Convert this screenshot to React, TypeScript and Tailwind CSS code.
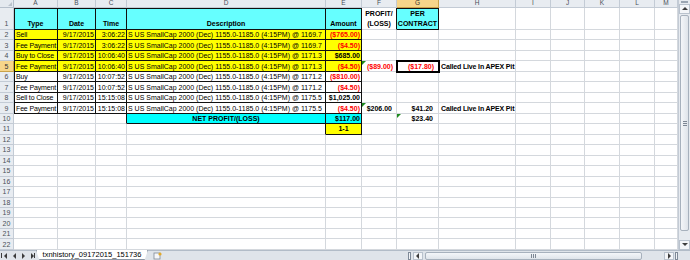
import type { ReactNode } from "react";

const COLS = ["A", "B", "C", "D", "E", "F", "G", "H", "I", "J", "K", "L", "M"];

const txns = [
  { type: "Sell", time: "3:06:22", px: "1169.7", amt: "($765.00)", neg: true },
  { type: "Fee Payment", time: "3:06:22", px: "1169.7", amt: "($4.50)", neg: true },
  { type: "Buy to Close", time: "10:06:40", px: "1171.3", amt: "$685.00", neg: false },
  { type: "Fee Payment", time: "10:06:40", px: "1171.3", amt: "($4.50)", neg: true },
  { type: "Buy", time: "10:07:52", px: "1171.2", amt: "($810.00)", neg: true },
  { type: "Fee Payment", time: "10:07:52", px: "1171.2", amt: "($4.50)", neg: true },
  { type: "Sell to Close", time: "15:15:08", px: "1175.5", amt: "$1,025.00", neg: false },
  { type: "Fee Payment", time: "15:15:08", px: "1175.5", amt: "($4.50)", neg: true },
];

const GRID = "border-r border-b border-[#d4d8dd]";
const BOX = "border-r border-b border-[#111]";

const Tri = () => (
  <span className="absolute left-0 top-0 h-0 w-0 border-t-[4px] border-r-[4px] border-t-[#1e8a1e] border-r-transparent" />
);

type C = { content?: ReactNode; cls: string };

function buildCell(r: number, c: number): C {
  const col = COLS[c];
  // header row 1
  if (r === 1) {
    if (c <= 4) {
      const labels = ["Type", "Date", "Time", "Description", "Amount"];
      return {
        content: labels[c],
        cls: `${BOX} bg-[#66ffff] font-bold justify-center items-end pb-[1px] ${c === 0 ? "shadow-[inset_1px_1px_0_#111]" : "shadow-[inset_0_1px_0_#111]"}`,
      };
    }
    if (col === "F")
      return {
        content: (
          <span className="text-center leading-[10px]">
            PROFIT/
            <br />
            (LOSS)
          </span>
        ),
        cls: "border-r border-b border-r-[#111] border-b-[#d4d8dd] font-bold justify-center items-center",
      };
    if (col === "G")
      return {
        content: (
          <span className="text-center leading-[10px]">
            PER
            <br />
            CONTRACT
          </span>
        ),
        cls: `${BOX} bg-[#66ffff] font-bold justify-center items-center shadow-[inset_0_1px_0_#111]`,
      };
    return { cls: GRID };
  }
  if (r >= 2 && r <= 9) {
    const t = txns[r - 2];
    const fill = r <= 5 ? "bg-[#ffff00]" : "bg-white";
    if (c <= 4) {
      const base = `${BOX} ${fill}`;
      if (c === 0)
        return {
          content: t.type,
          cls: `${base} justify-start pl-[2px] tracking-[-0.15px] overflow-hidden shadow-[inset_1px_0_0_#111]`,
        };
      if (c === 1) return { content: "9/17/2015", cls: `${base} justify-end pr-[1px]` };
      if (c === 2) return { content: t.time, cls: `${base} justify-end pr-[1px]` };
      if (c === 3)
        return {
          content: `S US SmallCap 2000 (Dec) 1155.0-1185.0 (4:15PM) @ ${t.px}`,
          cls: `${base} justify-start pl-[1px] overflow-hidden`,
        };
      return {
        content: t.amt,
        cls: `${base} justify-end pr-[1px] font-bold ${t.neg ? "text-[#ff0000]" : "text-black"}`,
      };
    }
    if (r === 5) {
      if (col === "F")
        return { content: <><Tri />($89.00)</>, cls: `${GRID} relative justify-end pr-[3px] font-bold text-[#ff0000]` };
      if (col === "G")
        return {
          content: "($17.80)",
          cls: `${GRID} relative z-10 justify-end pr-[4px] font-bold text-[#ff0000] outline-2 outline-black -outline-offset-1 bg-white`,
        };
      if (col === "H") return { content: "Called Live In APEX Pit", cls: `${GRID} justify-start pl-[2px] font-bold tracking-[-0.15px]` };
    }
    if (r === 9) {
      if (col === "F") return { content: <><Tri />$206.00</>, cls: `${GRID} relative justify-end pr-[4px] font-bold` };
      if (col === "G") return { content: "$41.20", cls: `${GRID} justify-end pr-[5px] font-bold` };
      if (col === "H") return { content: "Called Live In APEX Pit", cls: `${GRID} justify-start pl-[2px] font-bold tracking-[-0.15px]` };
    }
    return { cls: GRID };
  }
  if (r === 10) {
    if (col === "C") return { cls: "border-r border-b border-r-[#111] border-b-[#d4d8dd]" };
    if (col === "D") return { content: "NET PROFIT/(LOSS)", cls: `${BOX} bg-[#00ffff] justify-center font-bold` };
    if (col === "E") return { content: "$117.00", cls: `${BOX} bg-[#00ffff] justify-end pr-[1px] font-bold` };
    if (col === "G") return { content: <><Tri />$23.40</>, cls: `${GRID} relative justify-end pr-[5px] font-bold` };
    return { cls: GRID };
  }
  if (r === 11) {
    if (col === "D") return { cls: "border-r border-b border-r-[#111] border-b-[#d4d8dd]" };
    if (col === "E") return { content: "1-1", cls: `${BOX} bg-[#ffff00] justify-center font-bold` };
  }
  return { cls: GRID };
}

const Arrow = ({ dir }: { dir: "up" | "down" | "left" | "right" }) => {
  const pts = {
    up: "1,5 4,2 7,5",
    down: "1,2 4,5 7,2",
    left: "5,1 2,4 5,7",
    right: "3,1 6,4 3,7",
  }[dir];
  return (
    <svg width="8" height="8" viewBox="0 0 8 8">
      <polygon points={pts} fill="#3c3c3c" />
    </svg>
  );
};

export default function App() {
  const rows = Array.from({ length: 22 }, (_, i) => i + 1);
  return (
    <div className="flex h-[260px] w-[690px] flex-col overflow-hidden bg-white font-['Liberation_Sans',Arial,sans-serif] text-[7px] text-black">
      <div className="flex h-[250px]">
        <div className="grid h-[250px] grid-cols-[14px_44px_38px_31px_199px_36px_35px_42px_77px_35px_34px_35px_35px_23px] grid-rows-[8px_22px_repeat(21,10.476px)]">
          <div className="relative border-r border-b border-[#b5bfcb] bg-[#e4e9ef]">
            <span className="absolute right-[1px] bottom-[1px] h-0 w-0 border-b-[4px] border-l-[4px] border-b-[#b9c1cb] border-l-transparent" />
          </div>
          {COLS.map((c) => (
            <div
              key={c}
              className={`flex items-center justify-center border-r border-b text-[6.5px] leading-none ${
                c === "G"
                  ? "border-[#c9a24a] bg-[#f7d58a] text-[#333]"
                  : "border-[#c3cbd5] bg-[#e8ecf1] text-[#4a4f57]"
              }`}
            >
              {c}
            </div>
          ))}
          {rows.map((r) => (
            <div key={r} className="contents">
              <div
                className={`flex justify-center border-r border-b text-[7px] leading-none ${
                  r === 5
                    ? "border-[#c9a24a] bg-[#f7d58a] text-[#333]"
                    : "border-[#c3cbd5] bg-[#e8ecf1] text-[#4a4f57]"
                } ${r === 1 ? "items-end pb-[2px]" : "items-center"}`}
              >
                {r}
              </div>
              {COLS.map((_, c) => {
                const cell = buildCell(r, c);
                return (
                  <div
                    key={c}
                    className={`flex min-w-0 items-center whitespace-nowrap leading-[9px] ${cell.cls}`}
                  >
                    {cell.content}
                  </div>
                );
              })}
            </div>
          ))}
        </div>
        <div className="flex w-[12px] flex-col border-l border-[#c3cbd5] bg-[#e6eaef]">
          <div className="mx-[2px] mt-[1px] h-[2px] border border-[#9aa5b2] bg-[#f1f3f6]" />
          <div className="mt-[1px] flex h-[10px] items-center justify-center border border-[#b9c2cd] bg-[#f3f5f8]">
            <Arrow dir="up" />
          </div>
          <div className="mx-[1px] my-[1px] flex flex-1 items-center justify-center rounded-[2px] border border-[#a7b1bd] bg-gradient-to-r from-[#f4f6f9] to-[#dfe4ea]">
            <div className="flex flex-col gap-[1px]">
              <span className="h-px w-[4px] bg-[#7d8794]" />
              <span className="h-px w-[4px] bg-[#7d8794]" />
              <span className="h-px w-[4px] bg-[#7d8794]" />
            </div>
          </div>
          <div className="h-[8px]" />
          <div className="flex h-[10px] items-center justify-center border border-[#b9c2cd] bg-[#f3f5f8]">
            <Arrow dir="down" />
          </div>
        </div>
      </div>
      <div className="flex h-[10px] items-stretch border-t border-[#b2bcc8] bg-[#dfe4ea]">
        <div className="flex w-[36px] items-center justify-around px-[1px]">
          <span className="flex items-center">
            <span className="h-[5px] w-px bg-[#3c3c3c]" />
            <Arrow dir="left" />
          </span>
          <Arrow dir="left" />
          <Arrow dir="right" />
          <span className="flex items-center">
            <Arrow dir="right" />
            <span className="-ml-[2px] h-[5px] w-px bg-[#3c3c3c]" />
          </span>
        </div>
        <div className="-mt-px flex w-[112px] items-center justify-center border-x border-b border-[#8d98a6] bg-white px-[3px] text-[7.5px] leading-none text-black [clip-path:polygon(0_0,100%_0,97%_100%,3%_100%)]">
          txnhistory_09172015_151736
        </div>
        <div className="ml-[3px] flex w-[12px] items-center justify-center">
          <svg width="9" height="8" viewBox="0 0 9 8">
            <rect x="1" y="1" width="6" height="6" fill="#f4f6f9" stroke="#7f8a98" strokeWidth="0.8" />
            <circle cx="7" cy="2" r="1.6" fill="#e2a92b" />
          </svg>
        </div>
        <div className="flex-1" />
        <div className="flex w-[270px] items-center">
          <span className="h-[8px] w-[3px] border border-[#7f8a98] bg-[#f1f3f6]" />
          <span className="mx-[2px] flex h-[8px] w-[10px] items-center justify-center border border-[#b9c2cd] bg-[#f3f5f8]">
            <Arrow dir="left" />
          </span>
          <span className="flex h-[8px] flex-1 items-center justify-center rounded-[2px] border border-[#a7b1bd] bg-gradient-to-b from-[#f4f6f9] to-[#dfe4ea]">
            <span className="flex gap-[1px]">
              <span className="h-[4px] w-px bg-[#7d8794]" />
              <span className="h-[4px] w-px bg-[#7d8794]" />
              <span className="h-[4px] w-px bg-[#7d8794]" />
            </span>
          </span>
          <span className="w-[22px]" />
          <span className="flex h-[8px] w-[10px] items-center justify-center border border-[#b9c2cd] bg-[#f3f5f8]">
            <Arrow dir="right" />
          </span>
          <span className="ml-[1px] h-[8px] w-[3px] border border-[#7f8a98] bg-[#f1f3f6]" />
        </div>
        <div className="w-[12px]" />
      </div>
    </div>
  );
}
